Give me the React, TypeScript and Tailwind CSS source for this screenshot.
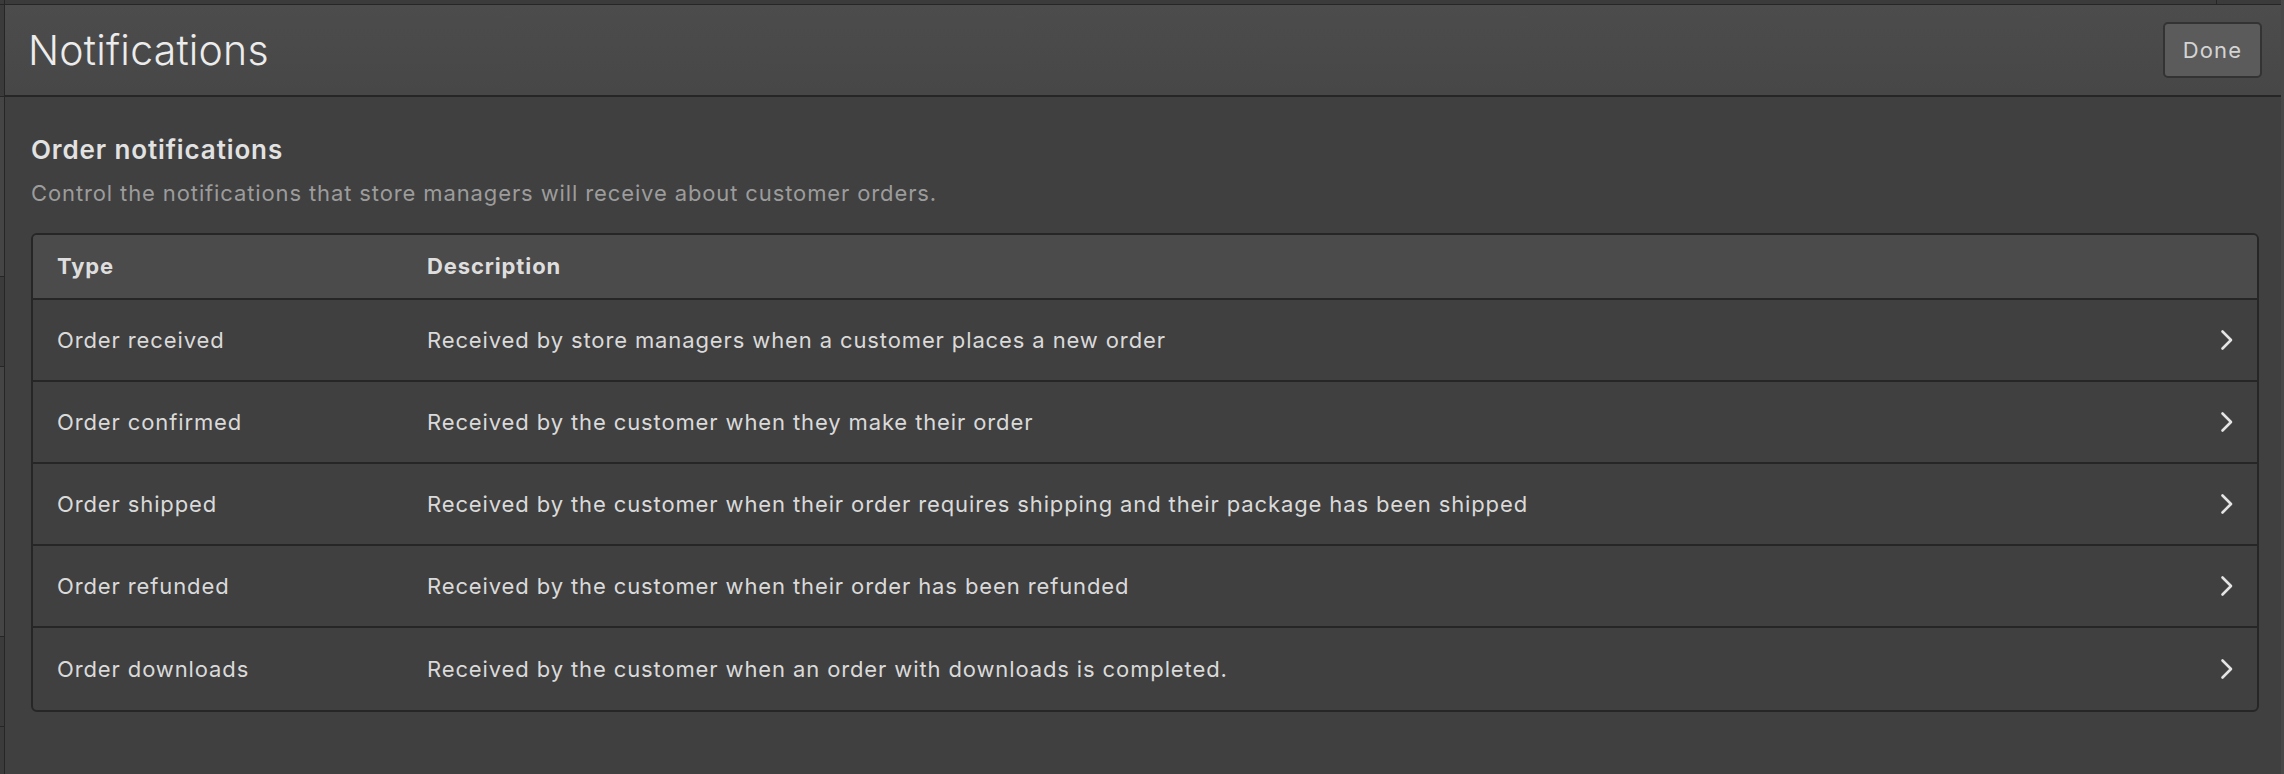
import React from "react";

const rows = [
  { type: "Order received", description: "Received by store managers when a customer places a new order" },
  { type: "Order confirmed", description: "Received by the customer when they make their order" },
  {
    type: "Order shipped",
    description: "Received by the customer when their order requires shipping and their package has been shipped",
  },
  { type: "Order refunded", description: "Received by the customer when their order has been refunded" },
  { type: "Order downloads", description: "Received by the customer when an order with downloads is completed." },
];

const Chevron = () => (
  <svg width="14" height="22" viewBox="0 0 14 22" fill="none" className="block">
    <polyline
      points="2.5,2.5 11,11 2.5,19.5"
      stroke="#e4e4e4"
      strokeWidth="2.6"
      strokeLinecap="round"
      strokeLinejoin="round"
    />
  </svg>
);

const App = () => {
  return (
    <div className="flex h-[774px] w-[2284px] overflow-hidden bg-[#3b3b3b] font-['Inter','Noto_Sans',sans-serif] text-[#d9d9d9]">
      {/* page behind the sheet */}
      <div className="flex w-[5px] shrink-0 flex-col border-r border-[#262626]">
        <div className="h-[5px] border-b border-[#262626]" />
        <div className="h-[92px] border-b border-[#262626]" />
        <div className="h-[180px] border-b border-[#262626] bg-[#454545]" />
        <div className="h-[90px] border-b border-[#262626]" />
        <div className="h-[270px] border-b border-[#262626] bg-[#454545]" />
        <div className="h-[90px] border-b border-[#262626]" />
      </div>

      <div className="flex flex-1 flex-col">
        <div className="flex h-[5px] shrink-0 border-b border-[#262626]">
          <div className="w-[2212px] border-r border-[#262626]" />
        </div>

        <div className="flex flex-1 flex-col bg-[#404040]">
          {/* Header */}
          <div className="flex h-[92px] shrink-0 items-center justify-between border-b-2 border-[#262626] bg-gradient-to-b from-[#4c4c4c] to-[#474747] pl-[23px] pr-[19px]">
            <h1 className="text-[41px] font-light leading-none tracking-[0.2px] text-[#ececec]">Notifications</h1>
            <button className="h-[56px] w-[99px] rounded-[5px] border-2 border-[#333333] bg-[#5b5b5b] text-[22px] tracking-[0.05em] text-[#d4d4d4]">
              Done
            </button>
          </div>

          {/* Content */}
          <div className="pl-[26px] pr-[22px] pt-[37px] tracking-[0.055em]">
            <h2 className="text-[26px] font-semibold leading-[32px] text-[#e2e2e2]">Order notifications</h2>
            <p className="mt-[13px] text-[22px] leading-[28px] text-[#9c9c9c]">
              Control the notifications that store managers will receive about customer orders.
            </p>

            <div className="mt-[26px] overflow-hidden rounded-[6px] border-2 border-[#262626]">
              <div className="grid h-[65px] grid-cols-[370px_1fr] items-center border-b-2 border-[#262626] bg-[#4b4b4b] pl-[24px] text-[22px] font-bold text-[#dedede]">
                <span>Type</span>
                <span>Description</span>
              </div>
              {rows.map((row, i) => (
                <div
                  key={row.type}
                  className={`grid h-[82px] grid-cols-[370px_1fr_auto] items-center pl-[24px] pr-[23px] text-[22px] text-[#dadada] ${
                    i < rows.length - 1 ? "border-b-2 border-[#262626]" : ""
                  }`}
                >
                  <span>{row.type}</span>
                  <span>{row.description}</span>
                  <Chevron />
                </div>
              ))}
            </div>
          </div>
        </div>
      </div>

      <div className="w-[3px] shrink-0 bg-[#484848]" />
    </div>
  );
};

export default App;
